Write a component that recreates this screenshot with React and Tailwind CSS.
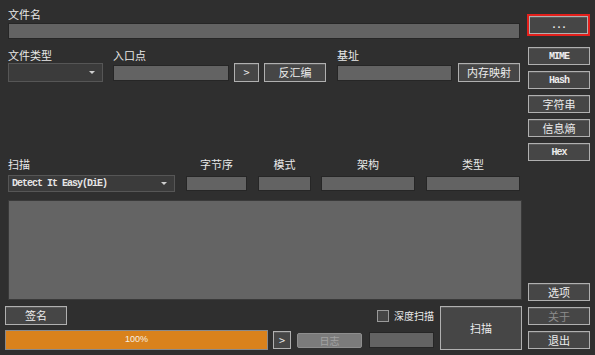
import React from "react";

const cjk = { fontFamily: "'Noto Sans CJK SC', 'Noto Sans', sans-serif" };
const mono = { fontFamily: "'Liberation Mono', 'DejaVu Sans Mono', monospace" };

// raised dark button with light edge, as in the Qt dark theme
function Btn({ children, className = "", dim = false, latin = false }) {
  return (
    <div
      className={`flex items-center justify-center border border-[#b0b0b0] bg-[#464646] shadow-[inset_0_1px_0_#5a5a5a] ${
        dim ? "text-[#8c8c8c]" : "text-[#ececec]"
      } ${latin ? "text-[10px] font-bold tracking-[-1px]" : "text-[11px]"} ${className}`}
      style={latin ? mono : cjk}
    >
      {children}
    </div>
  );
}

function Field({ className = "" }) {
  return <div className={`bg-[#636363] border border-[#262626] ${className}`} />;
}

function Combo({ className = "", text }) {
  return (
    <div
      className={`flex items-center justify-between bg-[#3b3b3b] border border-[#565656] pl-[3px] pr-[7px] ${className}`}
    >
      <span className="text-[10px] font-bold text-[#e6e6e6] tracking-[-1px] leading-none" style={mono}>
        {text}
      </span>
      <span className="w-0 h-0 border-l-[3px] border-r-[3px] border-t-[3px] border-l-transparent border-r-transparent border-t-[#cfcfcf]" />
    </div>
  );
}

function Label({ children, className = "" }) {
  return (
    <div className={`h-[14px] leading-[14px] text-[11px] text-[#e8e8e8] ${className}`} style={cjk}>
      {children}
    </div>
  );
}

export default function App() {
  return (
    <div className="w-[595px] h-[355px] bg-[#2f2f2f] flex overflow-hidden" style={cjk}>
      {/* main column */}
      <div className="w-[523px] pl-[5px] flex flex-col">
        <div className="ml-[3px] flex flex-col">
          <Label className="mt-[7px]">文件名</Label>
          <Field className="mt-[2px] w-[512px] h-[16px]" />

          <div className="mt-[9px] flex">
            <div className="w-[95px] flex flex-col">
              <Label>文件类型</Label>
              <Combo className="mt-[1px] h-[19px]" text="" />
            </div>
            <div className="ml-[10px] flex flex-col">
              <Label>入口点</Label>
              <div className="mt-[1px] h-[19px] flex items-center">
                <Field className="w-[116px] h-[16px]" />
                <Btn className="ml-[5px] w-[25px] h-[19px]">&gt;</Btn>
                <Btn className="ml-[5px] w-[62px] h-[19px]">反汇编</Btn>
              </div>
            </div>
            <div className="ml-[11px] flex flex-col">
              <Label>基址</Label>
              <div className="mt-[1px] h-[19px] flex items-center">
                <Field className="w-[115px] h-[16px]" />
                <Btn className="ml-[6px] w-[62px] h-[19px]">内存映射</Btn>
              </div>
            </div>
          </div>

          <div className="mt-[75px] flex">
            <div className="w-[167px] flex flex-col">
              <Label>扫描</Label>
              <Combo className="mt-[4px] h-[17px]" text="Detect It Easy(DiE)" />
            </div>
            <div className="ml-[11px] w-[61px] flex flex-col items-center">
              <Label>字节序</Label>
              <Field className="mt-[5px] w-full h-[15px]" />
            </div>
            <div className="ml-[11px] w-[53px] flex flex-col items-center">
              <Label>模式</Label>
              <Field className="mt-[5px] w-full h-[15px]" />
            </div>
            <div className="ml-[10px] w-[94px] flex flex-col items-center">
              <Label>架构</Label>
              <Field className="mt-[5px] w-full h-[15px]" />
            </div>
            <div className="ml-[11px] w-[94px] flex flex-col items-center">
              <Label>类型</Label>
              <Field className="mt-[5px] w-full h-[15px]" />
            </div>
          </div>

          <div className="mt-[8px] w-[514px] h-[100px] bg-[#646464] border border-[#3a3a3a]" />
        </div>

        {/* bottom controls */}
        <div className="mt-[6px] flex">
          <div className="w-[429px] flex flex-col">
            <div className="h-[19px] flex items-center justify-between">
              <Btn className="w-[62px] h-[19px]">签名</Btn>
              <div className="flex items-center">
                <div className="w-[12px] h-[12px] border border-[#9a9a9a] bg-[#454545]" />
                <span className="ml-[5px] text-[10px] text-[#e8e8e8]">深度扫描</span>
              </div>
            </div>
            <div className="mt-[5px] h-[20px] flex items-center">
              <div className="w-[263px] h-[20px] bg-[#d9821c] border border-[#8a8a8a] flex items-center justify-center">
                <span className="text-[9px] text-[#f6efe2]" style={{ fontFamily: "'Liberation Sans', sans-serif" }}>
                  100%
                </span>
              </div>
              <Btn className="ml-[5px] w-[18px] h-[18px]">&gt;</Btn>
              <div className="ml-[6px] w-[65px] h-[15px] rounded-[2px] bg-[#7b7b7b] border border-[#8e8e8e] flex items-center justify-center text-[10px] text-[#a2a2a2]">
                日志
              </div>
              <Field className="ml-[7px] w-[65px] h-[16px]" />
            </div>
          </div>
          <Btn className="ml-[6px] w-[82px] h-[44px]">扫描</Btn>
        </div>
      </div>

      {/* right button column */}
      <div className="ml-[5px] w-[62px] flex flex-col">
        <div className="mt-[14px] -ml-[1px] w-[63px] h-[22px] border-2 border-[#e3201c] flex">
          <Btn className="flex-1 text-[#bdbdbd]" latin>
            ...
          </Btn>
        </div>
        <div className="mt-[11px] flex flex-col gap-[6px]">
          <Btn className="h-[18px]" latin>MIME</Btn>
          <Btn className="h-[18px]" latin>Hash</Btn>
          <Btn className="h-[18px]">字符串</Btn>
          <Btn className="h-[18px]">信息熵</Btn>
          <Btn className="h-[18px]" latin>Hex</Btn>
        </div>
        <div className="mt-auto mb-[6px] flex flex-col gap-[6px]">
          <Btn className="h-[18px]">选项</Btn>
          <Btn className="h-[18px]" dim>关于</Btn>
          <Btn className="h-[18px]">退出</Btn>
        </div>
      </div>
    </div>
  );
}
